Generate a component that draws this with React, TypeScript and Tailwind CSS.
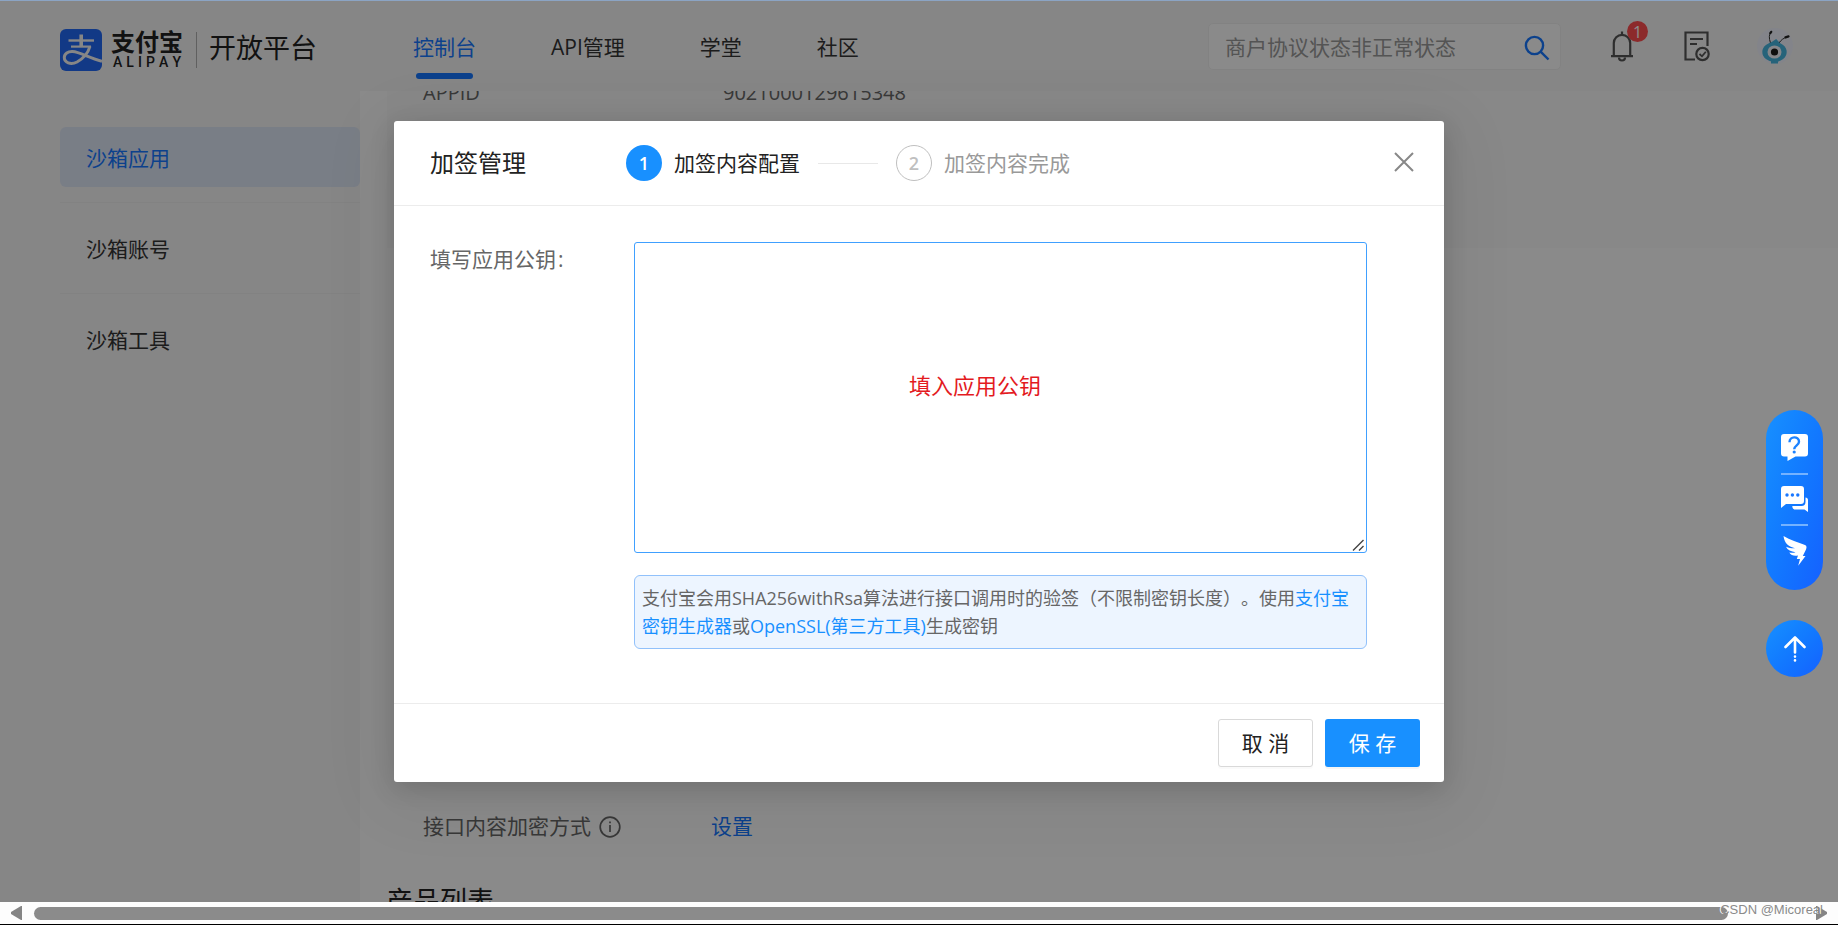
import React from 'react';

const navItems = ['控制台', 'API管理', '学堂', '社区'];
const sideItems = ['沙箱应用', '沙箱账号', '沙箱工具'];

function AlipayMark() {
  return (
    <svg viewBox="0 0 42 42" className="h-[42px] w-[42px]" aria-hidden="true">
      <rect width="42" height="42" rx="6" fill="#2168f5" />
      <g fill="none" stroke="#f4f4f4" strokeLinecap="butt">
        <path d="M8.5 11.5H34" strokeWidth="2.4" />
        <path d="M21.2 5.5V17.5" strokeWidth="3.6" />
        <path d="M11 17.6H31" strokeWidth="2.2" />
        <path d="M30 17.4C28 24 22.5 30 17 33C10.500 36.300 4.300 33.500 4.300 28.600C4.300 24.500 8 22.300 12.500 22.500C20 23 28 28.500 42 32.300" strokeWidth="3" />
      </g>
    </svg>
  );
}

function SearchIcon() {
  return (
    <svg viewBox="0 0 26 26" className="h-[26px] w-[26px]" fill="none" stroke="#1677ff" strokeWidth="2.4" aria-hidden="true">
      <circle cx="10.500" cy="10.500" r="8.600" />
      <path d="M16.600 16.600L24.500 24.500" />
    </svg>
  );
}

function BellIcon() {
  return (
    <svg viewBox="0 0 24 32" className="h-8 w-6" fill="none" stroke="#555" strokeWidth="2.2" aria-hidden="true">
      <path d="M3.800 26V13a8.200 8.200 0 0 1 16.400 0V26" />
      <path d="M1 26.200H23M12 1.500V5" />
      <path d="M9 27.500a3 3 0 0 0 6 0" />
    </svg>
  );
}

function AgreementIcon() {
  return (
    <svg viewBox="0 0 28 32" className="h-8 w-7" fill="none" stroke="#555" strokeWidth="2.200" aria-hidden="true">
      <path d="M24.500 16V2.500H2.500V29.500H12" />
      <path d="M7 9H20M7 14H14" />
      <circle cx="19.500" cy="24" r="6.200" />
      <path d="M16.500 24L19 26.300L22.800 21.700" strokeWidth="1.800" />
    </svg>
  );
}

function AntAvatar() {
  return (
    <svg viewBox="0 0 36 36" className="h-9 w-9" aria-hidden="true">
      <circle cx="18" cy="18" r="18" fill="#eef1fb" />
      <path d="M13.500 15C11.800 10 12 6.500 13.800 4.500M22 15C24 12 26.500 10 30 9.200" fill="none" stroke="#333" strokeWidth="1" />
      <path d="M13.300 5.200L14.200 3.800M28.500 9.400L31.500 8.400" stroke="#222" strokeWidth="2.200" strokeLinecap="round" />
      <path d="M11 16.500L19.200 11L24 16.500Z" fill="#45b4de" />
      <ellipse cx="17.500" cy="24" rx="12.200" ry="10" fill="#45b4de" />
      <path d="M14 33H21V35.500H14Z" fill="#45b4de" />
      <ellipse cx="17.500" cy="24" rx="7" ry="6.600" fill="#f3f5fb" />
      <circle cx="17.500" cy="24" r="3.600" fill="#1c1c1c" />
    </svg>
  );
}

function Header() {
  return (
    <header className="relative z-10 flex h-[90px] shrink-0 items-center bg-[#f4f4f4] pr-[45px] pl-[60px]">
      <a href="#home" className="flex items-center pt-2" aria-label="支付宝开放平台">
        <AlipayMark />
        <span className="ml-2 flex w-[74px] flex-col items-center text-[#222]">
          <span className="text-2xl leading-6 font-bold">支付宝</span>
          <span className="flex w-[68px] justify-between font-['Roboto'] text-sm leading-4 font-medium">
            {'ALIPAY'.split('').map((c, i) => (
              <span key={i}>{c}</span>
            ))}
          </span>
        </span>
        <span className="mx-3 h-9 w-px bg-[#b0b0b0]" />
        <span className="pb-1 text-[27px] text-[#222]">开放平台</span>
      </a>
      <nav className="ml-24 flex h-full items-center gap-[75px] text-[21px]">
        {navItems.map((item, i) => (
          <a
            key={item}
            href={'#nav' + i}
            className={i === 0 ? 'relative flex h-full items-center pt-1 text-[#1677ff]' : 'flex h-full items-center pt-1 text-[#333]'}
          >
            {item}
            {i === 0 && <span className="absolute inset-x-[3px] bottom-3 h-[6px] rounded-[3px] bg-[#1677ff]" />}
          </a>
        ))}
      </nav>
      <form className="ml-auto flex h-[47px] w-[353px] items-center rounded-[5px] border border-[#ededed] bg-[#fcfcfc] pr-[10px] pl-4" onSubmit={(e) => e.preventDefault()}>
        <input
          type="search"
          aria-label="搜索"
          placeholder="商户协议状态非正常状态"
          className="min-w-0 flex-1 bg-transparent pt-[3px] text-[21px] outline-none placeholder:text-[#999]"
        />
        <button type="submit" aria-label="搜索" className="pt-1">
          <SearchIcon />
        </button>
      </form>
      <button type="button" aria-label="消息" className="relative ml-[49px]">
        <BellIcon />
        <span className="absolute -top-[9px] left-[17px] flex h-[21px] w-[21px] items-center justify-center rounded-full bg-[#ff4d4f] text-base text-white">
          1
        </span>
      </button>
      <button type="button" aria-label="协议" className="ml-[49px]">
        <AgreementIcon />
      </button>
      <button type="button" aria-label="账户" className="ml-[46px]">
        <AntAvatar />
      </button>
    </header>
  );
}

function Sidebar() {
  return (
    <aside className="w-[360px] shrink-0 bg-[#f4f4f4] pt-9 pl-[60px]">
      <ul className="divide-y divide-[#ededed]">
        {sideItems.map((item, i) => (
          <li key={item} className={i === 0 ? 'pb-[15px]' : 'py-[15px]'}>
            <a
              href={'#side' + i}
              className={
                i === 0
                  ? 'flex h-[60px] items-center rounded-md bg-[#dde5f5] px-[26px] pt-[3px] text-[21px] text-[#1677ff]'
                  : 'flex h-[60px] items-center rounded-md px-[26px] pt-[3px] text-[21px] text-[#333]'
              }
            >
              {item}
            </a>
          </li>
        ))}
      </ul>
    </aside>
  );
}

function Content() {
  return (
    <main className="flex flex-1 flex-col bg-[#fcfcfc] pl-[27px]">
      <div className="flex h-[157px] shrink-0 bg-[#f7f7f7] pl-9 text-xl leading-6 text-[#666]">
        <div className="-mt-[10px] w-[300px]">APPID</div>
        <div className="-mt-[10px]">9021000129615348</div>
      </div>
      <div className="mt-[563px] flex h-8 items-center pl-9 text-[21px] text-[#666]">
        <span>接口内容加密方式</span>
        <svg viewBox="0 0 22 22" className="ml-2 h-[22px] w-[22px]" fill="none" stroke="#666" strokeWidth="1.700" aria-hidden="true">
          <circle cx="11" cy="11" r="9.800" />
          <path d="M11 9V16M11 5.500V7.200" />
        </svg>
        <a href="#setting" className="ml-[90px] text-[#1677ff]">设置</a>
      </div>
      <h2 className="mt-[38px] -ml-px text-[27px] leading-10 text-[#222]">产品列表</h2>
    </main>
  );
}

function SignDialog() {
  return (
    <section
      role="dialog"
      aria-modal="true"
      aria-label="加签管理"
      className="flex w-[1050px] flex-col rounded-[3px] bg-white shadow-[0_6px_24px_rgba(0,0,0,0.15),0_12px_70px_12px_rgba(0,0,0,0.06)]"
    >
      <div className="flex h-[85px] items-center border-b border-[#ececec] pr-[30px] pl-9">
        <h1 className="w-[196px] text-2xl text-[#222]">加签管理</h1>
        <ol className="flex items-center text-[21px]">
          <li className="flex items-center gap-3 text-[#222]">
            <span className="flex h-9 w-9 items-center justify-center rounded-full bg-[#1890ff] text-lg font-semibold text-white">1</span>
            <span className="pt-[2px]">加签内容配置</span>
          </li>
          <li className="mx-[18px] h-px w-[60px] bg-[#e8e8e8]" aria-hidden="true" />
          <li className="flex items-center gap-3 text-[#999]">
            <span className="flex h-9 w-9 items-center justify-center rounded-full border border-[#bfbfbf] text-lg font-semibold text-[#bfbfbf]">2</span>
            <span className="pt-[2px]">加签内容完成</span>
          </li>
        </ol>
        <button type="button" aria-label="关闭" className="ml-auto pb-[2px]">
          <svg viewBox="0 0 20 20" className="h-5 w-5" stroke="#888" strokeWidth="2" aria-hidden="true">
            <path d="M1 1L19 19M19 1L1 19" />
          </svg>
        </button>
      </div>
      <div className="flex pt-9 pr-[77px] pb-[54px] pl-9">
        <label htmlFor="public-key" className="w-[204px] shrink-0 text-[21px] leading-[34px] text-[#666]">
          填写应用公钥<span className="ml-[2px]">:</span>
        </label>
        <div className="flex flex-1 flex-col">
          <div className="relative flex h-[311px]">
            <textarea id="public-key" className="flex-1 resize-none rounded-[3px] border border-[#40a0ff] p-3 text-[21px] outline-none" />
            <span className="pointer-events-none absolute top-[125px] left-[275px] text-[22px] leading-9 text-[#e31b1f]">填入应用公钥</span>
            <svg viewBox="0 0 12 12" className="pointer-events-none absolute right-[3px] bottom-[2px] h-3 w-3" stroke="#444" strokeWidth="1.400" aria-hidden="true">
              <path d="M1 11.500L11.500 1M7 11.500L11.500 7" />
            </svg>
          </div>
          <p className="mt-[22px] rounded-md border border-[#91c1fb] bg-[#edf5ff] py-2 pr-2 pl-[7px] text-lg leading-7 text-[#666] [text-spacing-trim:space-all]">
            支付宝会用SHA256withRsa算法进行接口调用时的验签（不限制密钥长度）。使用
            <a href="#keytool" className="text-[#1890ff]">支付宝密钥生成器</a>或
            <a href="#openssl" className="text-[#1890ff]">OpenSSL(第三方工具)</a>生成密钥
          </p>
        </div>
      </div>
      <div className="flex justify-end gap-3 border-t border-[#ececec] px-6 py-[15px] text-[21px]">
        <button type="button" className="h-12 w-[95px] rounded-[3px] border border-[#d9d9d9] bg-white pt-[2px] text-[#222] shadow-[0_2px_0_rgba(0,0,0,0.02)]">
          取 消
        </button>
        <button type="button" className="h-12 w-[95px] rounded-[3px] bg-[#1890ff] pt-[2px] text-white shadow-[0_2px_0_rgba(0,0,0,0.04)]">
          保 存
        </button>
      </div>
    </section>
  );
}

function FloatingTools() {
  return (
    <div className="absolute top-[409px] right-[15px] flex flex-col gap-[30px]">
      <div className="flex h-[180px] w-[57px] flex-col items-center rounded-full bg-linear-to-br from-[#1890ff] to-[#1660ff] pt-6">
        <button type="button" aria-label="帮助">
          <svg viewBox="0 0 27 27" className="h-[27px] w-[27px]" aria-hidden="true">
            <path d="M3 0H24a3 3 0 0 1 3 3V19.500a3 3 0 0 1-3 3H14.500L6.500 27V22.500H3a3 3 0 0 1-3-3V3a3 3 0 0 1 3-3Z" fill="#fff" />
            <path d="M8.500 8.200C8.500 1.800 18 1.800 18 7.800C18 11.200 13.200 11.500 13.200 15.300" fill="none" stroke="#1c82ff" strokeWidth="2.400" />
            <circle cx="13.200" cy="18" r="1.600" fill="#1c82ff" />
          </svg>
        </button>
        <span className="mt-3 h-[2px] w-[27px] bg-[#74b2ff]" />
        <button type="button" aria-label="在线客服" className="mt-[11px]">
          <svg viewBox="0 0 27 26" className="h-[26px] w-[27px]" aria-hidden="true">
            <path d="M3 0H20a3 3 0 0 1 3 3V15a3 3 0 0 1-3 3H5L0 22V3a3 3 0 0 1 3-3Z" fill="#fff" />
            <path d="M24.500 11.500C26 11.500 27 12.500 27 14V26L23.500 23.500H14C12.300 23.500 11.300 22 11.300 20H20.500C23 20 24.500 18.500 24.500 16Z" fill="#fff" />
            <circle cx="6" cy="9" r="1.700" fill="#1a78ff" />
            <circle cx="11.400" cy="9" r="1.700" fill="#1a78ff" />
            <circle cx="16.800" cy="9" r="1.700" fill="#1a78ff" />
          </svg>
        </button>
        <span className="mt-3 h-[2px] w-[27px] bg-[#74b2ff]" />
        <button type="button" aria-label="钉钉" className="mt-[10px]">
          <svg viewBox="0 0 24 30" className="h-[30px] w-6" fill="#fff" aria-hidden="true">
            <path d="M.5 0C7 4 15 6 22 9C24 10 23.700 11.500 23 13.500L19.800 20H22.500L15.200 29.800L17 23H13.800L15 19.500C11 20.300 8 19.200 6.300 16.500C9 17 11 16.800 12.500 16.200C8 15.700 4.500 14 3 10.800C6.500 12.200 9.500 12.500 12 12.300C6 10.500 1.500 8 .5 0Z" />
          </svg>
        </button>
      </div>
      <button type="button" aria-label="返回顶部" className="flex h-[57px] w-[57px] items-center justify-center rounded-full bg-linear-to-br from-[#1890ff] to-[#1660ff]">
        <svg viewBox="0 0 22 26" className="h-[26px] w-[22px]" fill="none" stroke="#fff" strokeWidth="2.600" strokeLinecap="round" strokeLinejoin="round" aria-hidden="true">
          <path d="M11 1.500V16.500M1.500 11L11 1.500L20.500 11" />
          <path d="M11 20.500V20.600M11 24.300V24.400" />
        </svg>
      </button>
    </div>
  );
}

export default function App() {
  return (
    <div className="flex h-screen flex-col overflow-hidden bg-[#fdfdfd] font-['Open_Sans','Noto_Sans_CJK_SC',sans-serif]">
      <div className="h-px shrink-0 bg-[#8ba4c4]" />
      <div className="relative flex min-h-0 flex-1 flex-col overflow-hidden">
        <Header />
        <div className="flex min-h-0 flex-1 overflow-hidden">
          <Sidebar />
          <Content />
        </div>
        <div className="absolute inset-0 z-20 flex items-start justify-center bg-black/45 pt-[120px]">
          <SignDialog />
          <FloatingTools />
        </div>
      </div>
      <footer className="relative flex h-[23px] shrink-0 items-center border-b border-black px-[11px]">
        <svg viewBox="0 0 12 14" className="h-[14px] w-3" fill="#858585" aria-hidden="true">
          <path d="M11 0V14H10L0 8V6L10 0Z" />
        </svg>
        <div className="mr-[87px] ml-[11px] h-[13px] flex-1 rounded-full bg-[#8b8b8b]" />
        <svg viewBox="0 0 12 14" className="h-[14px] w-3" fill="#858585" aria-hidden="true">
          <path d="M1 0V14H2L12 8V6L2 0Z" />
        </svg>
        <span className="absolute top-0 right-[15px] font-['Liberation_Sans'] text-[13px] leading-4 text-[#8a8a8a] [text-shadow:-1px_0_0_#ffffff]">
          CSDN @Micoreal
        </span>
      </footer>
    </div>
  );
}
